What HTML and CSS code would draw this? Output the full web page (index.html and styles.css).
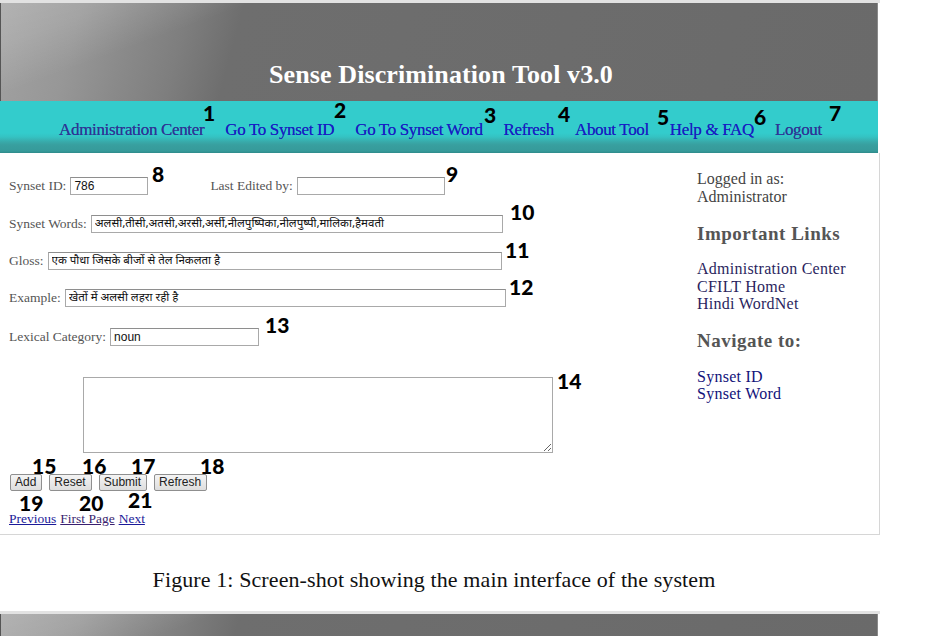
FILE: index.html
```html
<!DOCTYPE html>
<html lang="en">
<head>
<meta charset="utf-8">
<title>Sense Discrimination Tool v3.0</title>
<link rel="stylesheet" href="styles.css">
</head>
<body>
<div class="shot">
  <header class="banner"><h1 class="title">Sense Discrimination Tool v3.0</h1></header>
  <nav class="menu">
    <a class="nav nav-dark" href="#">Administration Center</a>
    <a class="nav" href="#">Go To Synset ID</a>
    <a class="nav" href="#">Go To Synset Word</a>
    <a class="nav" href="#">Refresh</a>
    <a class="nav" href="#">About Tool</a>
    <a class="nav" href="#">Help &amp; FAQ</a>
    <a class="nav nav-dark" href="#">Logout</a>
  </nav>
  <div class="main">
    <form class="form">
      <div class="row row-1">
        <label class="lbl">Synset ID:</label>
        <input class="inp inp-id" value="786">
        <label class="lbl lbl-edited">Last Edited by:</label>
        <input class="inp inp-edited" value="">
      </div>
      <div class="row row-2">
        <label class="lbl">Synset Words:</label>
        <input class="inp inp-words deva" value="अलसी,तीसी,अतसी,अरसी,अर्सी,नीलपुष्पिका,नीलपुष्पी,मालिका,हैमवती">
      </div>
      <div class="row row-3">
        <label class="lbl">Gloss:</label>
        <input class="inp inp-gloss deva" value="एक पौधा जिसके बीजों से तेल निकलता है">
      </div>
      <div class="row row-4">
        <label class="lbl">Example:</label>
        <input class="inp inp-example deva" value="खेतों में अलसी लहरा रही है">
      </div>
      <div class="row row-5">
        <label class="lbl">Lexical Category:</label>
        <input class="inp inp-lex" value="noun">
      </div>
      <div class="row row-6">
        <textarea class="notes"></textarea>
      </div>
      <div class="row row-7">
        <button type="button" class="btn">Add</button>
        <button type="button" class="btn">Reset</button>
        <button type="button" class="btn">Submit</button>
        <button type="button" class="btn">Refresh</button>
      </div>
      <div class="row row-8">
        <a class="pg" href="#">Previous</a>
        <a class="pg pg-visited" href="#">First Page</a>
        <a class="pg" href="#">Next</a>
      </div>
    </form>
    <aside class="side">
      <p class="logged">Logged in as:<br>Administrator</p>
      <h2 class="side-h">Important Links</h2>
      <p class="side-links">
        <a class="sl" href="#">Administration Center</a>
        <a class="sl" href="#">CFILT Home</a>
        <a class="sl" href="#">Hindi WordNet</a>
      </p>
      <h2 class="side-h side-h2">Navigate to:</h2>
      <p class="side-links side-links2">
        <a class="sl sl-nav" href="#">Synset ID</a>
        <a class="sl sl-nav" href="#">Synset Word</a>
      </p>
    </aside>
  </div>

  <span class="num n1">1</span>
  <span class="num n2">2</span>
  <span class="num n3">3</span>
  <span class="num n4">4</span>
  <span class="num n5">5</span>
  <span class="num n6">6</span>
  <span class="num n7">7</span>
  <span class="num n8">8</span>
  <span class="num n9">9</span>
  <span class="num n10">10</span>
  <span class="num n11">11</span>
  <span class="num n12">12</span>
  <span class="num n13">13</span>
  <span class="num n14">14</span>
  <span class="num n15">15</span>
  <span class="num n16">16</span>
  <span class="num n17">17</span>
  <span class="num n18">18</span>
  <span class="num n19">19</span>
  <span class="num n20">20</span>
  <span class="num n21">21</span>
</div>

<p class="caption">Figure 1: Screen-shot showing the main interface of the system</p>

<div class="shot shot-next">
  <div class="banner banner-next"></div>
</div>
</body>
</html>
```

FILE: styles.css
```css
html, body {
  margin: 0;
  padding: 0;
  background: #ffffff;
}
body {
  width: 946px;
  height: 636px;
  overflow: hidden;
  font-family: "Liberation Serif", serif;
}

.shot {
  position: relative;
  width: 880px;
  border-top: 3px solid #e2e2e2;
  box-sizing: border-box;
}

.banner {
  height: 98px;
  margin-right: 2px;
  border-left: 1px solid #555;
  border-right: 1px solid #8a8a8a;
  background:
    linear-gradient(160deg, rgba(255,255,255,0.18) 0%, rgba(255,255,255,0.12) 10%, rgba(255,255,255,0) 22%),
    linear-gradient(105deg, #a2a2a2 0%, #979797 9%, #8a8a8a 15%, #7e7e7e 21%, #6e6e6e 27%, #6a6a6a 100%);
  display: flex;
  align-items: flex-end;
  justify-content: center;
  box-sizing: border-box;
  padding-bottom: 11px;
}

.title {
  margin: 0;
  color: #ffffff;
  font-family: "Liberation Serif", serif;
  font-weight: bold;
  font-size: 26px;
  line-height: 30px;
  letter-spacing: 0.1px;
  padding-left: 4px;
}

.menu {
  height: 52px;
  margin-right: 2px;
  background: linear-gradient(to bottom, #33cccc 0px, #33cccc 32px, #35c2c2 36px, #38a9a9 41px, #389f9f 44px, #369a9a 50px, #2e8a8a 52px);
  display: flex;
  justify-content: center;
  align-items: flex-start;
  gap: 21px;
  padding-top: 19px;
  padding-left: 3px;
  box-sizing: border-box;
}

.nav {
  font-family: "Liberation Serif", serif;
  font-size: 17px;
  line-height: 20px;
  color: #1a1acc;
  text-decoration: none;
  letter-spacing: -0.35px;
  text-shadow: 0 0 0.4px rgba(0,0,80,0.6);
}
.nav-dark {
  color: #333399;
}

.main {
  display: flex;
  height: 382px;
  border-right: 1px solid #d6d6d6;
  border-bottom: 1px solid #d6d6d6;
  box-sizing: border-box;
  background: #ffffff;
}

.form {
  width: 688px;
  padding-left: 9px;
  box-sizing: border-box;
  display: flex;
  flex-direction: column;
}

.row {
  display: flex;
  align-items: center;
}
.row-1 { margin-top: 24px; }
.row-2 { margin-top: 20px; }
.row-3 { margin-top: 19px; }
.row-4 { margin-top: 19px; }
.row-5 { margin-top: 21px; }
.row-6 { margin-top: 31px; padding-left: 74px; }
.row-7 { margin-top: 21px; gap: 7px; padding-left: 1px; }
.row-8 { margin-top: 20px; gap: 4px; }

.lbl {
  font-family: "Liberation Serif", serif;
  font-size: 13.5px;
  color: #555555;
  margin-right: 4px;
}
.lbl-edited {
  margin-left: 62px;
  margin-right: 4px;
}

.inp {
  height: 18px;
  box-sizing: border-box;
  border: 1px solid #a9a9a9;
  border-top-color: #8e8e8e;
  padding: 0 3px;
  margin: 0;
  font-family: "Liberation Sans", sans-serif;
  font-size: 12px;
  color: #111;
  background: #fff;
  outline: none;
}
.deva {
  font-family: "Noto Sans Devanagari", "Lohit Devanagari", "FreeSans", "Noto Sans", sans-serif;
  font-size: 11.5px;
}
.inp-id { width: 78px; }
.inp-edited { width: 148px; }
.inp-words { width: 412px; }
.inp-gloss { width: 454px; }
.inp-example { width: 441px; }
.inp-lex { width: 149px; }

.notes {
  width: 470px;
  height: 76px;
  box-sizing: border-box;
  border: 1px solid #a9a9a9;
  margin: 0;
  resize: both;
  font-family: "Liberation Sans", sans-serif;
}

.btn {
  height: 17px;
  padding: 0 5px 0 4px;
  margin: 0;
  box-sizing: border-box;
  border: 1px solid #8f8f8f;
  border-radius: 2px;
  background: linear-gradient(to bottom, #f4f4f4, #dedede);
  font-family: "Liberation Sans", sans-serif;
  font-size: 12px;
  color: #222;
  line-height: 15px;
}

.pg {
  font-family: "Liberation Serif", serif;
  font-size: 13.5px;
  line-height: 15px;
  color: #1a1a99;
}
.pg-visited {
  color: #3a1f70;
}

.side {
  padding-left: 9px;
  padding-top: 17px;
  box-sizing: border-box;
}
.logged {
  margin: 0;
  font-size: 16px;
  line-height: 17.5px;
  color: #444;
}
.side-h {
  margin: 18px 0 0 0;
  font-size: 19px;
  font-weight: bold;
  color: #555;
  line-height: 22px;
  letter-spacing: 0.5px;
}
.side-h2 {
  margin-top: 17px;
}
.side-links {
  margin: 15px 0 0 0;
  display: flex;
  flex-direction: column;
  line-height: 17.5px;
}
.side-links2 {
  margin-top: 16px;
}
.sl {
  font-size: 16px;
  letter-spacing: 0.25px;
  color: #2b1f5e;
  text-decoration: none;
}
.sl-nav {
  color: #12127a;
}

.num {
  position: absolute;
  font-family: "Lato", "Open Sans", sans-serif;
  font-weight: 900;
  font-size: 21px;
  line-height: 20px;
  color: #000;
}
.n1 { left: 203px; top: 100px; }
.n2 { left: 334px; top: 97px; }
.n3 { left: 484px; top: 102px; }
.n4 { left: 558px; top: 101px; }
.n5 { left: 657px; top: 104px; }
.n6 { left: 754px; top: 104px; }
.n7 { left: 829px; top: 100px; }
.n8 { left: 152px; top: 161px; }
.n9 { left: 446px; top: 161px; }
.n10 { left: 510px; top: 199px; }
.n11 { left: 505px; top: 237px; }
.n12 { left: 509px; top: 274px; }
.n13 { left: 265px; top: 312px; }
.n14 { left: 557px; top: 368px; }
.n15 { left: 32px; top: 453px; }
.n16 { left: 82px; top: 453px; }
.n17 { left: 131px; top: 453px; }
.n18 { left: 200px; top: 453px; }
.n19 { left: 19px; top: 490px; }
.n20 { left: 79px; top: 490px; }
.n21 { left: 128px; top: 487px; }

.caption {
  margin: 34px 0 0 0;
  width: 868px;
  text-align: center;
  font-family: "Liberation Serif", serif;
  font-size: 22px;
  color: #111;
  line-height: 22px;
  letter-spacing: 0.1px;
}

.shot-next {
  margin-top: 20px;
}
.banner-next {
  height: 40px;
}
```
